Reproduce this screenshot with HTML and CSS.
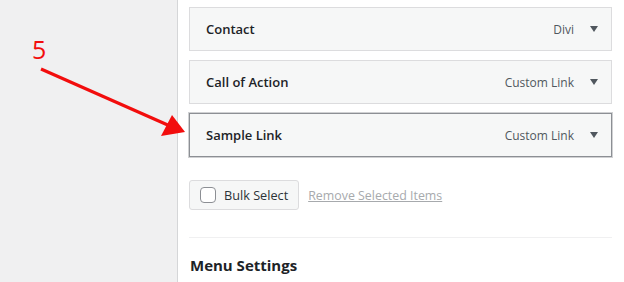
FILE: index.html
```html
<!DOCTYPE html>
<html lang="en">
<head>
  <meta charset="UTF-8">
  <title>Menu Structure</title>
  <link rel="stylesheet" href="styles.css">
</head>
<body>

  <div class="screen">
    <div class="sidebar"></div>

    <div class="content">
      <ul class="menu-items">
        <li class="menu-item">
          <span class="item-title">Contact</span>
          <span class="item-type">Divi</span>
          <span class="item-toggle"></span>
        </li>
        <li class="menu-item">
          <span class="item-title">Call of Action</span>
          <span class="item-type">Custom Link</span>
          <span class="item-toggle"></span>
        </li>
        <li class="menu-item active">
          <span class="item-title">Sample Link</span>
          <span class="item-type">Custom Link</span>
          <span class="item-toggle"></span>
        </li>
      </ul>

      <div class="bulk-actions">
        <label class="bulk-button">
          <span class="checkbox"></span>
          Bulk Select
        </label>
        <a class="remove-link">Remove Selected Items</a>
      </div>

      <h3 class="settings-title">Menu Settings</h3>
    </div>

    <!-- annotation drawn over the screenshot -->
    <div class="step-number">5</div>
    <svg class="step-arrow" width="200" height="150" viewBox="0 0 200 150">
      <line x1="41" y1="69" x2="170" y2="126" stroke="#f20d0d" stroke-width="3.2"/>
      <polygon points="185,132 161,136 172,115" fill="#f20d0d"/>
    </svg>
  </div>

</body>
</html>
```

FILE: styles.css
```css
body {
  margin: 0;
  padding: 0;
  font-family: "Open Sans", "Noto Sans", sans-serif;
  color: #1d2327;
  background-color: white;
}

.screen {
  position: relative;
  display: flex;
  width: 624px;
  height: 282px;
  overflow: hidden;
}

.sidebar {
  width: 177px;
  flex-shrink: 0;
  background-color: #f0f0f1;
  border-right: 1px solid #d5d6d8;
}

.content {
  flex: 1;
  padding: 7px 12px 0 11px;
}

.menu-items {
  list-style: none;
  margin: 0;
  padding: 0;
}

.menu-item {
  display: flex;
  align-items: center;
  box-sizing: border-box;
  height: 44px;
  margin-bottom: 9px;
  padding: 0 13px 0 16px;
  background-color: #f6f7f7;
  border: 1px solid #dcdcde;
}

.menu-item.active {
  border-color: #8c8f94;
  box-shadow: 0 0 0 1px #d0d1d3;
}

.item-title {
  flex: 1;
  font-size: 13px;
  font-weight: 600;
  color: #1d2327;
}

.item-type {
  font-size: 12px;
  color: #50575e;
}

.item-toggle {
  width: 0;
  height: 0;
  margin-left: 16px;
  border-left: 4px solid transparent;
  border-right: 4px solid transparent;
  border-top: 6px solid #50575e;
}

.bulk-actions {
  display: flex;
  align-items: center;
  gap: 9px;
  margin-top: 23px;
  padding-bottom: 27px;
  border-bottom: 1px solid #f0f0f1;
}

.bulk-button {
  display: flex;
  align-items: center;
  gap: 8px;
  box-sizing: border-box;
  height: 30px;
  padding: 0 10px;
  white-space: nowrap;
  background-color: #f6f7f7;
  border: 1px solid #dcdcde;
  border-radius: 3px;
  font-size: 12.7px;
  color: #2c3338;
}

.checkbox {
  width: 16px;
  height: 16px;
  flex-shrink: 0;
  box-sizing: border-box;
  background-color: white;
  border: 1px solid #8c8f94;
  border-radius: 4px;
}

.remove-link {
  font-size: 12.4px;
  color: #a7aaad;
  text-decoration: underline;
  white-space: nowrap;
}

.settings-title {
  margin: 17px 0 0 1px;
  font-size: 15px;
  font-weight: 700;
  color: #1d2327;
}

.step-number {
  position: absolute;
  left: 32px;
  top: 37px;
  font-size: 25px;
  line-height: 1;
  color: #f20d0d;
}

.step-arrow {
  position: absolute;
  left: 0;
  top: 0;
}
```
